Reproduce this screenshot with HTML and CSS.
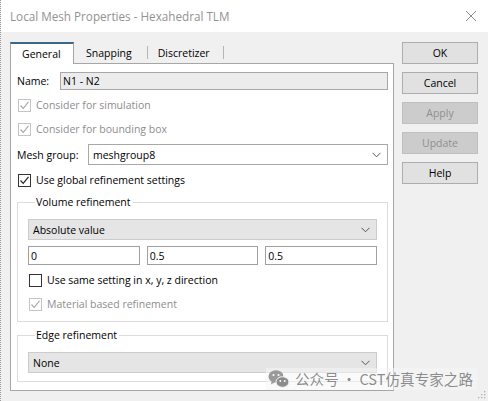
FILE: index.html
```html
<!DOCTYPE html>
<html>
<head>
<meta charset="utf-8">
<link rel="stylesheet" href="styles.css">
</head>
<body>
<div class="window">
  <div class="titlebar">
    <span class="title">Local Mesh Properties - Hexahedral TLM</span>
    <svg class="close" width="12" height="12" viewBox="0 0 12 12"><path d="M1 1L11 11M11 1L1 11" stroke="#8a8a8a" stroke-width="1" fill="none"/></svg>
  </div>
  <div class="main">
    <div class="tabs-area">
      <div class="tabstrip">
        <div class="tab active">General</div>
        <div class="tab t-snap">Snapping</div>
        <span class="sep"></span>
        <div class="tab t-disc">Discretizer</div>
        <span class="sep"></span>
      </div>
      <div class="panel">
        <div class="row name-row">
          <span class="label l-name">Name:</span>
          <div class="field readonly">N1 - N2</div>
        </div>
        <div class="check-row disabled first">
          <span class="box"><svg width="11" height="11" viewBox="0 0 11 11"><path d="M1.5 5.5L4.2 8.3L9.5 1.8" stroke="#a8a8a8" stroke-width="1.1" fill="none"/></svg></span>
          <span>Consider for simulation</span>
        </div>
        <div class="check-row disabled">
          <span class="box"><svg width="11" height="11" viewBox="0 0 11 11"><path d="M1.5 5.5L4.2 8.3L9.5 1.8" stroke="#a8a8a8" stroke-width="1.1" fill="none"/></svg></span>
          <span>Consider for bounding box</span>
        </div>
        <div class="row mesh-row">
          <span class="label l-mesh">Mesh group:</span>
          <div class="select white">
            <span>meshgroup8</span>
            <svg class="chev" width="9" height="6" viewBox="0 0 9 6"><path d="M0.5 0.8L4.5 4.8L8.5 0.8" stroke="#555" stroke-width="1" fill="none"/></svg>
          </div>
        </div>
        <div class="check-row global">
          <span class="box"><svg width="11" height="11" viewBox="0 0 11 11"><path d="M1.5 5.5L4.2 8.3L9.5 1.8" stroke="#222" stroke-width="1.2" fill="none"/></svg></span>
          <span>Use global refinement settings</span>
        </div>

        <div class="group vol">
          <div class="legend">Volume refinement</div>
          <div class="select gray">
            <span>Absolute value</span>
            <svg class="chev" width="9" height="6" viewBox="0 0 9 6"><path d="M0.5 0.8L4.5 4.8L8.5 0.8" stroke="#555" stroke-width="1" fill="none"/></svg>
          </div>
          <div class="inputs">
            <div class="field">0</div>
            <div class="field">0.5</div>
            <div class="field">0.5</div>
          </div>
          <div class="check-row in-group">
            <span class="box"></span>
            <span>Use same setting in x, y, z direction</span>
          </div>
          <div class="check-row in-group disabled">
            <span class="box"><svg width="11" height="11" viewBox="0 0 11 11"><path d="M1.5 5.5L4.2 8.3L9.5 1.8" stroke="#a8a8a8" stroke-width="1.1" fill="none"/></svg></span>
            <span>Material based refinement</span>
          </div>
        </div>

        <div class="group edge">
          <div class="legend">Edge refinement</div>
          <div class="select gray">
            <span>None</span>
            <svg class="chev" width="9" height="6" viewBox="0 0 9 6"><path d="M0.5 0.8L4.5 4.8L8.5 0.8" stroke="#555" stroke-width="1" fill="none"/></svg>
          </div>
        </div>
      </div>
    </div>
    <div class="buttons">
      <div class="btn">OK</div>
      <div class="btn">Cancel</div>
      <div class="btn off">Apply</div>
      <div class="btn off">Update</div>
      <div class="btn">Help</div>
    </div>
  </div>

  <div class="watermark">
    <svg width="22" height="20" viewBox="0 0 22 20">
      <ellipse cx="8" cy="7.5" rx="7.5" ry="6.3" fill="#9a9a9a"/>
      <path d="M3.5 12.5L3 15.5L6.5 13.5Z" fill="#9a9a9a"/>
      <ellipse cx="14.5" cy="13" rx="6.5" ry="5.3" fill="#8c8c8c" stroke="#f3f3f3" stroke-width="1"/>
      <circle cx="5.5" cy="6" r="1" fill="#fff"/>
      <circle cx="10.5" cy="6" r="1" fill="#fff"/>
      <circle cx="12.3" cy="12" r="0.9" fill="#fff"/>
      <circle cx="16.7" cy="12" r="0.9" fill="#fff"/>
    </svg>
    <span>公众号<span class="dot">·</span>CST仿真专家之路</span>
  </div>
  <div class="grip">
    <svg width="9" height="9" viewBox="0 0 9 9"><g fill="#b0b0b0"><rect x="7" y="1" width="1.3" height="1.3"/><rect x="4" y="4" width="1.3" height="1.3"/><rect x="7" y="4" width="1.3" height="1.3"/><rect x="1" y="7" width="1.3" height="1.3"/><rect x="4" y="7" width="1.3" height="1.3"/><rect x="7" y="7" width="1.3" height="1.3"/></g></svg>
  </div>
</div>
</body>
</html>
```

FILE: styles.css
```css
* { box-sizing: border-box; }
html, body { margin: 0; padding: 0; }
body {
  width: 488px;
  height: 401px;
  overflow: hidden;
  background: #f0f0f0;
  font-family: "Open Sans", "Noto Sans", "Liberation Sans", sans-serif;
  font-size: 10.5px;
  color: #000;
}
.window {
  position: relative;
  width: 488px;
  height: 401px;
  background: #f0f0f0;
  border-left: 1px dotted #9a9a9a;
}
.titlebar {
  height: 32px;
  background: #fff;
  display: flex;
  align-items: center;
  justify-content: space-between;
  padding: 0 10px 0 9px;
}
.title {
  font-size: 11.7px;
  color: #929292;
}
.close { margin-right: 1px; }

.main {
  display: flex;
  padding: 10px 0 0 9px;
}
.tabs-area { width: 384px; }
.tabstrip {
  display: flex;
  align-items: flex-end;
  height: 22px;
  border-bottom: 1px solid #a6a6a6;
}
.tab {
  height: 21px;
  display: flex;
  align-items: center;
}
.tab.active {
  width: 64px;
  height: 22px;
  margin-bottom: -1px;
  background: #fff;
  border: 1px solid #a6a6a6;
  border-top: 2px solid #3d6787;
  border-bottom: none;
  padding-left: 11px;
}
.t-snap { padding: 0 15px 0 12px; }
.t-disc { padding: 0 13px 0 10px; }
.sep {
  width: 1px;
  height: 13px;
  margin-bottom: 4px;
  background: #b5b5b5;
}
.panel {
  height: 327px;
  background: #fff;
  border: 1px solid #a6a6a6;
  border-top: none;
  padding: 8px 5px 0 6px;
  display: flex;
  flex-direction: column;
}
.row {
  display: flex;
  align-items: center;
  flex: none;
}
.label { flex: none; }
.l-name { width: 43px; }
.l-mesh { width: 71px; }
.name-row { height: 18px; }
.mesh-row { height: 21px; margin-top: 3px; }
.field {
  flex: 1;
  height: 18px;
  border: 1px solid #a0a0a0;
  background: #fff;
  padding-left: 2px;
  display: flex;
  align-items: center;
}
.field.readonly {
  background: #ececec;
  border-color: #a8a8a8;
}
.select {
  height: 21px;
  display: flex;
  align-items: center;
  justify-content: space-between;
  padding: 0 6px 0 4px;
  border: 1px solid #a8a8a8;
}
.row .select { flex: 1; }
.select.white { background: #fff; }
.select.gray { background: #e5e5e5; border-color: #cccccc; flex: none; }
.chev { flex: none; margin-top: 1px; }

.check-row {
  height: 24px;
  display: flex;
  align-items: center;
  gap: 5px;
  padding-left: 1px;
  flex: none;
}
.check-row.first { margin-top: 3px; }
.check-row.global { margin-top: 3px; }
.check-row.disabled { color: #8d8d8d; }
.box {
  width: 13px;
  height: 13px;
  flex: none;
  border: 1px solid #333;
  background: #fff;
  display: flex;
  align-items: center;
  justify-content: center;
}
.disabled .box { border-color: #c4c4c4; }

.group {
  border: 1px solid #dcdcdc;
  padding: 0 10px;
  display: flex;
  flex-direction: column;
  flex: none;
}
.vol { margin-top: 10px; padding-bottom: 5px; }
.edge { margin-top: 13px; padding-bottom: 8px; }
.legend {
  align-self: flex-start;
  margin: -8px 0 0 7px;
  padding: 0 2px 0 1px;
  height: 15px;
  line-height: 15px;
  background: #fff;
  flex: none;
}
.group .select { margin-top: 9px; }
.inputs {
  display: flex;
  gap: 7px;
  margin-top: 6px;
  flex: none;
}
.inputs .field { height: 19px; }
.inputs + .check-row { margin-top: 3px; }

.buttons {
  margin-left: 8px;
  width: 76px;
  display: flex;
  flex-direction: column;
  gap: 8px;
}
.btn {
  height: 22px;
  background: #e1e1e1;
  border: 1px solid #adadad;
  display: flex;
  align-items: center;
  justify-content: center;
}
.btn.off {
  background: #cccccc;
  border-color: #bfbfbf;
  color: #8f8f8f;
}

.watermark {
  position: absolute;
  left: 265px;
  top: 368px;
  display: flex;
  align-items: center;
  gap: 5px;
  padding: 1px 4px 1px 2px;
  background: rgba(246, 246, 246, 0.55);
  color: rgba(120, 120, 120, 0.85);
  font-family: "Noto Sans CJK SC", sans-serif;
  font-size: 14.6px;
  line-height: 20px;
}
.dot { margin: 0 3px; }
.grip {
  position: absolute;
  right: 2px;
  bottom: 2px;
  width: 9px;
  height: 9px;
  display: flex;
}
```
